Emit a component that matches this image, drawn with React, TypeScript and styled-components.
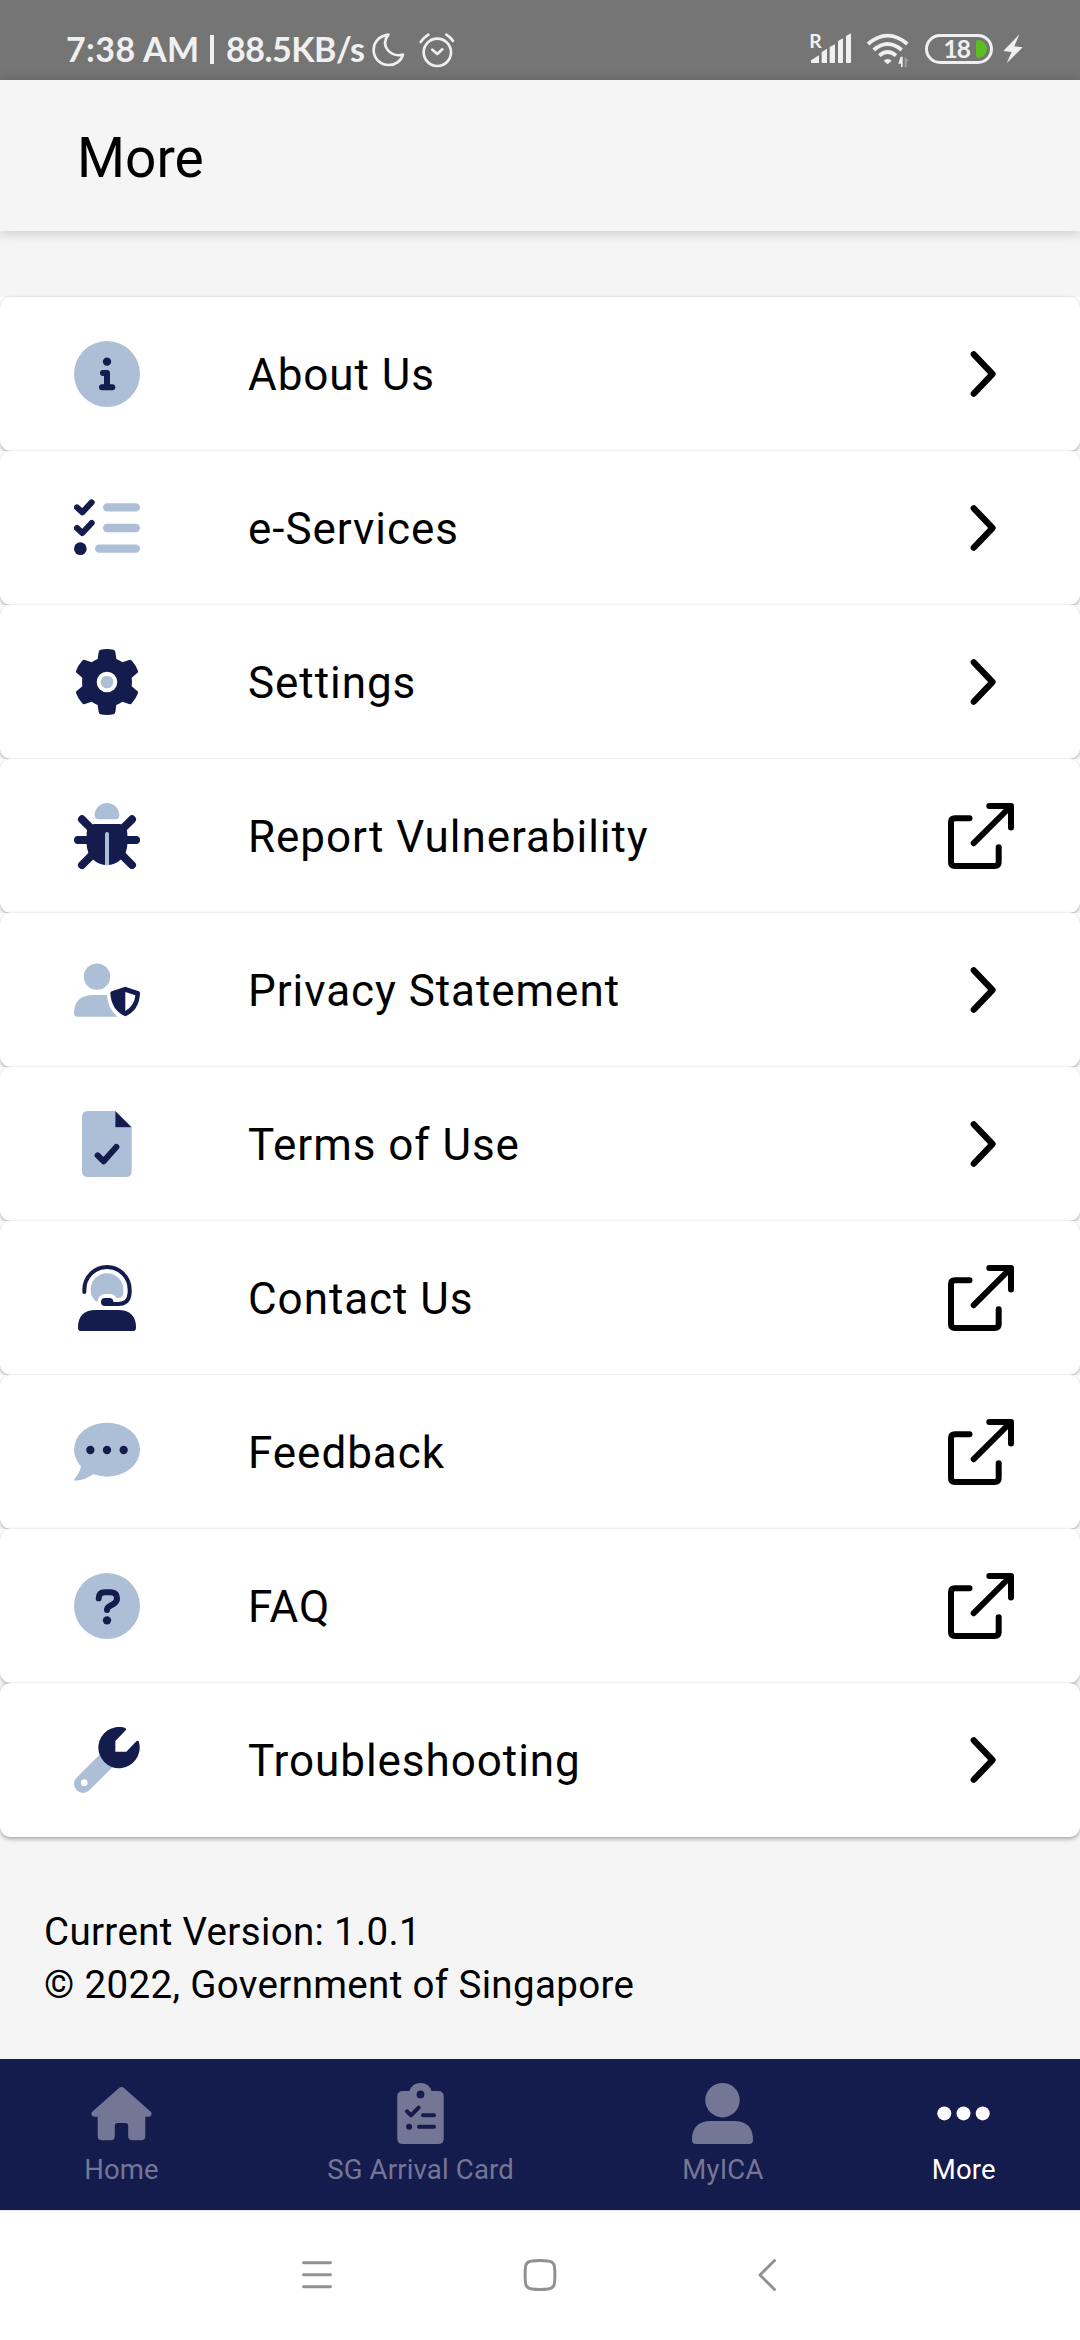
import React from "react";
import styled, { createGlobalStyle } from "styled-components";

const NAVY = "#141b4d";
const MIST = "#adbfd6";
const DIM = "#747695";
const LIGHT = "#f0f0f0";

const GlobalStyle = createGlobalStyle`
  * { box-sizing: border-box; }
  body { margin: 0; background: #f5f5f5; font-family: Roboto, "Noto Sans", sans-serif; color: #000; }
  svg { display: block; flex: none; }
`;

const Screen = styled.div`
  width: 1080px;
  height: 2340px;
  display: flex;
  flex-direction: column;
  background: #f5f5f5;
  overflow: hidden;
`;

const StatusBar = styled.header`
  height: 80px;
  flex: none;
  display: flex;
  justify-content: space-between;
  padding: 32px 57px 0 66px;
  background: #757575;
`;

const StatusGroup = styled.div`
  display: flex;
  align-items: flex-start;
`;

const StatusText = styled.span<{ $w: number; $track?: number }>`
  width: ${(p) => p.$w}px;
  font: 700 34px/34px Lato, "Noto Sans", sans-serif;
  letter-spacing: ${(p) => p.$track ?? 0}px;
  white-space: nowrap;
  color: ${LIGHT};
`;

const Divider = styled.span`
  width: 4px;
  height: 29px;
  margin: 3px 12px 0 0;
  background: ${LIGHT};
`;

const IconGap = styled.span<{ $w: number }>`
  width: ${(p) => p.$w}px;
`;

const Battery = styled.div`
  width: 68px;
  height: 30px;
  margin-top: 2px;
  display: flex;
  align-items: center;
  justify-content: flex-end;
  gap: 6px;
  padding-right: 3px;
  border: 3px solid ${LIGHT};
  border-radius: 15px;
  font: 700 24.5px/24px Lato, "Noto Sans", sans-serif;
  letter-spacing: -1px;
  color: ${LIGHT};
`;

const Charge = styled.span`
  width: 11px;
  height: 18px;
  border-radius: 2px 9px 9px 2px;
  background: #5bc01f;
`;

const IconShift = styled.span`
  display: flex;
  padding-top: 2px;
`;

const AppBar = styled.div`
  height: 151px;
  flex: none;
  display: flex;
  align-items: center;
  padding: 5px 0 0 77px;
  box-shadow: 0 1px 12px rgba(0, 0, 0, 0.22);
`;

const Title = styled.h1`
  margin: 0;
  font-size: 55px;
  font-weight: 400;
  line-height: 64px;
`;

const List = styled.ul`
  list-style: none;
  margin: 66px 0 0;
  padding: 0;
  flex: none;
`;

const Item = styled.li`
  background: #fff;
  &:last-child { background: none; }
`;

const Row = styled.div`
  height: 154px;
  display: flex;
  align-items: center;
  padding: 0 66px 0 74px;
  border-radius: 11px;
  background: #fff;
  box-shadow: 0 2px 4px rgba(0, 0, 0, 0.32), 0 -1px 0 rgba(0, 0, 0, 0.025);
`;

const RowLabel = styled.span`
  flex: 1;
  margin-left: 108px;
  padding-top: 1px;
  font-size: 44px;
  line-height: 52px;
  letter-spacing: 0.95px;
`;

const Footer = styled.footer`
  flex: 1;
  padding: 68px 44px 0;
  font-size: 38.5px;
  line-height: 53px;
  letter-spacing: 0.34px;
`;

const TabBar = styled.nav`
  height: 151px;
  flex: none;
  display: flex;
  justify-content: space-around;
  padding-top: 24px;
  background: ${NAVY};
`;

const Tab = styled.div<{ $active?: boolean }>`
  display: flex;
  flex-direction: column;
  align-items: center;
  gap: 10px;
  color: ${(p) => (p.$active ? "#fff" : DIM)};
  font-size: 27.5px;
  line-height: 32px;
  letter-spacing: 0.18px;
`;

const SystemNav = styled.div`
  height: 130px;
  flex: none;
  display: flex;
  justify-content: center;
  gap: 163px;
  padding-top: 34px;
  border-top: 1px solid #e6e6f2;
  background: #fff;
`;

const Duo = ({ children }: { children: React.ReactNode }) => (
  <svg width="66" height="66" viewBox="0 0 198 198" fill="none" strokeLinecap="round" strokeLinejoin="round">
    {children}
  </svg>
);

const InfoIcon = () => (
  <Duo>
    <circle cx="99" cy="99" r="99" fill={MIST} />
    <circle cx="99" cy="62" r="12.5" fill={NAVY} />
    <path d="M87 96H99V139M84 139H115" stroke={NAVY} strokeWidth="18" />
  </Duo>
);

const ServicesIcon = () => (
  <Duo>
    <path d="M9 37L25 52L53 22M9 99L25 114L53 84" stroke={NAVY} strokeWidth="18" />
    <circle cx="19" cy="161" r="19" fill={NAVY} />
    <path d="M99.500 37H185.500M99.500 99H185.500M75.500 161H185.500" stroke={MIST} strokeWidth="25" />
  </Duo>
);

const GearIcon = () => (
  <Duo>
    <path
      fill={NAVY}
      d="M79 2Q99 -2 119 2Q123 4 124 9L127 30Q137 34 145 40L165 33Q170 31 174 36Q186 49 192 66Q193 70 189 73L173 86Q174.500 99 173 112L189 125Q193 128 192 132Q186 149 174 162Q170 167 165 165L145 158Q137 164 127 168L124 189Q123 194 119 196Q99 200 79 196Q75 194 74 189L71 168Q61 164 53 158L33 165Q28 167 24 162Q12 149 6 132Q5 128 9 125L25 112Q23.500 99 25 86L9 73Q5 70 6 66Q12 49 24 36Q28 31 33 33L53 40Q61 34 71 30L74 9Q75 4 79 2Z"
    />
    <circle cx="99" cy="99" r="31" fill="#fff" />
    <circle cx="99" cy="99" r="19" fill={MIST} />
  </Duo>
);

const BugIcon = () => (
  <Duo>
    <path d="M62 37A37 37 0 0 1 136 37Q136 49 124 49H74Q62 49 62 37Z" fill={MIST} />
    <path d="M24 49L56 81M174 49L142 81M12 111H186M24 186L56 154M174 186L142 154" stroke={NAVY} strokeWidth="24" />
    <path d="M60 63H138Q158 68 160 90V124A61 62 0 0 1 38 124V90Q40 68 60 63Z" fill={NAVY} />
    <path d="M93 186V93Q93 87 99 87Q105 87 105 93V186Z" fill={MIST} />
  </Duo>
);

const PrivacyIcon = () => (
  <Duo>
    <circle cx="69" cy="59" r="39.5" fill={MIST} />
    <path d="M0 168Q1 114 58 114H99Q101 155 130 179H11Q0 179 0 168Z" fill={MIST} />
    <path d="M154 89L194 103Q198 105 198 109Q196 160 154 178Q112 160 109 109Q109 105 113 103Z" fill={NAVY} />
    <path d="M154 105L184 115Q182 146 154 162Z" fill="#fff" />
  </Duo>
);

const TermsIcon = () => (
  <Duo>
    <path d="M42 0H124V49H173V180Q173 198 155 198H42Q24 198 24 180V18Q24 0 42 0Z" fill={MIST} />
    <path d="M124 0L173 49H124Z" fill={NAVY} />
    <path d="M71 133L89 151L127 108" stroke={NAVY} strokeWidth="18" />
  </Duo>
);

const ContactIcon = () => (
  <Duo>
    <path d="M50 74A49 49 0 0 1 148 74V82Q148 98 134 99H127Q121 87 108 87H92Q73 89 70 112Q50 98 50 74Z" fill={MIST} />
    <path d="M31 81V74A68 68 0 0 1 167 74V83Q165 117 133 117H104" stroke={NAVY} strokeWidth="12" />
    <rect x="81" y="99" width="37" height="24" rx="12" fill={NAVY} />
    <path d="M12 188Q12 135 66 135H132Q186 135 186 188Q186 198 176 198H22Q12 198 12 188Z" fill={NAVY} />
  </Duo>
);

const FeedbackIcon = () => (
  <Duo>
    <ellipse cx="99" cy="92" rx="99" ry="81" fill={MIST} />
    <path d="M22 138Q18 161 2 179Q-2 185 4 185Q34 184 62 163Z" fill={MIST} />
    <circle cx="49" cy="93" r="12.5" fill={NAVY} />
    <circle cx="99" cy="93" r="12.5" fill={NAVY} />
    <circle cx="149" cy="93" r="12.5" fill={NAVY} />
  </Duo>
);

const FaqIcon = () => (
  <Duo>
    <circle cx="99" cy="99" r="99" fill={MIST} />
    <path d="M74 76Q75 58 92 58H110Q129 59 129 76Q129 86 120 92L106 100Q99 104 99 111" stroke={NAVY} strokeWidth="18" />
    <circle cx="99" cy="142" r="12.5" fill={NAVY} />
  </Duo>
);

const WrenchIcon = () => (
  <Duo>
    <path d="M27 171L100 98" stroke={MIST} strokeWidth="54" />
    <circle cx="31" cy="167" r="10" fill="#fff" />
    <path d="M152 2Q159 5 155 10L124 42V74H157L187 43Q193 39 195 46A62 62 0 1 1 152 2Z" fill={NAVY} />
  </Duo>
);

const Chevron = () => (
  <svg width="66" height="66" viewBox="0 0 66 66" fill="none" stroke="#000" strokeWidth="6.300" strokeLinecap="round" strokeLinejoin="round">
    <path d="M25.800 13.400L44.500 33L25.800 52.600" />
  </svg>
);

const External = () => (
  <svg width="66" height="66" viewBox="0 0 66 66" fill="none" stroke="#000" strokeWidth="6" strokeLinecap="round" strokeLinejoin="round">
    <path d="M21.500 15.300H7Q3 15.300 3 19.300V59Q3 63 7 63H46.700Q50.700 63 50.700 59V44.300" />
    <path d="M41.300 3H63V24.500M62 4L25.700 40.200" />
  </svg>
);

const HomeTab = () => (
  <svg width="61" height="61" viewBox="0 0 61 61" fill={DIM}>
    <path d="M28 5Q30.500 3 33 5L59.500 28.500Q61.500 31 60 32.500Q59 33.700 57 33.700H54.300V53Q54.300 57.300 50 57.300H41.500Q37.200 57.300 37.200 53V43Q37.200 40 34.200 40H26.800Q23.800 40 23.800 43V53Q23.800 57.300 19.500 57.300H11Q6.700 57.300 6.700 53V33.700H4Q2 33.700 1 32.500Q-.5 31 1.500 28.500Z" />
  </svg>
);

const CardTab = () => (
  <svg width="61" height="61" viewBox="0 0 61 61" fill="none" strokeLinecap="round" strokeLinejoin="round">
    <path d="M13 8H19.500Q22 0 30.500 0Q39 0 41.500 8H48Q53.700 8 53.700 13.500V55.500Q53.700 61 48 61H13Q7.300 61 7.300 55.500V13.500Q7.300 8 13 8Z" fill={DIM} />
    <circle cx="30.500" cy="11.400" r="3.900" fill={NAVY} />
    <path d="M17 28.300L21 32.300L28.600 24.700M33 32.300H44M29 43.700H44" stroke={NAVY} strokeWidth="4" />
    <circle cx="19.100" cy="43.700" r="3" fill={NAVY} />
  </svg>
);

const UserTab = () => (
  <svg width="61" height="61" viewBox="0 0 61 61" fill={DIM}>
    <circle cx="30.500" cy="17.200" r="17.200" />
    <path d="M0 57Q0 38 19 38H42Q61 38 61 57Q61 61 57 61H4Q0 61 0 57Z" />
  </svg>
);

const MoreTab = () => (
  <svg width="61" height="61" viewBox="0 0 61 61" fill="#fff">
    <circle cx="11.300" cy="30.400" r="7" />
    <circle cx="30.500" cy="30.400" r="7" />
    <circle cx="49.700" cy="30.400" r="7" />
  </svg>
);

const Moon = () => (
  <svg width="36" height="36" viewBox="0 0 108 108" fill="none" stroke={LIGHT} strokeWidth="8" strokeLinejoin="round">
    <path d="M52 8C24 12 8 30 8 54C8 80 28 99 54 99C74 99 91 86 96 68C80 72 62 68 50 54C39 40 40 24 52 8Z" />
  </svg>
);

const Alarm = () => (
  <svg width="39" height="36" viewBox="0 0 117 108" fill="none" stroke={LIGHT} strokeWidth="8" strokeLinecap="round" strokeLinejoin="round">
    <circle cx="58" cy="61" r="41" />
    <path d="M8 30Q18 16 31 8M85 8Q98 16 105 27M43 53L58 66L73 52" />
  </svg>
);

const Signal = () => (
  <svg width="48" height="40" viewBox="72 75 144 120" fill={LIGHT}>
    <text x="88" y="143" fontFamily="Lato, sans-serif" fontWeight="700" fontSize="58">R</text>
    <path d="M93 181L117 166V189H95Q93 189 93 187ZM125 156L141 146V189H127Q125 189 125 187ZM149 141L165 133V187Q165 189 163 189H151Q149 189 149 187ZM174 123L189 115V187Q189 189 187 189H176Q174 189 174 187ZM198 108L213 100V187Q213 189 211 189H200Q198 189 198 187Z" />
  </svg>
);

const SignalSlot = styled.span`
  display: flex;
  margin-top: -7px;
`;

const Wifi = () => (
  <svg width="44" height="36" viewBox="259 96 132 108" fill="none" stroke={LIGHT} strokeWidth="11">
    <path d="M265 132Q324 82 383 132M282 150Q324 114 366 150M299 167Q324 145 349 167" />
    <path d="M312 182Q324 172 336 182L324 193Z" fill={LIGHT} stroke="none" />
    <path d="M363 170H369V201H364V191H356Z" fill={LIGHT} stroke="none" />
    <path d="M375 201V170L388 184H381V201Z" fill="#a0a0a0" stroke="none" />
  </svg>
);

const Bolt = () => (
  <svg width="20" height="30" viewBox="668 102 60 90" fill={LIGHT}>
    <path d="M717 103L669 153L694 156L679 190L727 142L702 139Z" />
  </svg>
);

const SysIcon = ({ d }: { d: string }) => (
  <svg width="60" height="60" viewBox="0 0 60 60" fill="none" stroke="#919191" strokeWidth="2.900" strokeLinecap="round" strokeLinejoin="round">
    <path d={d} />
  </svg>
);

const rows = [
  { label: "About Us", Icon: InfoIcon },
  { label: "e-Services", Icon: ServicesIcon },
  { label: "Settings", Icon: GearIcon },
  { label: "Report Vulnerability", Icon: BugIcon, external: true },
  { label: "Privacy Statement", Icon: PrivacyIcon },
  { label: "Terms of Use", Icon: TermsIcon },
  { label: "Contact Us", Icon: ContactIcon, external: true },
  { label: "Feedback", Icon: FeedbackIcon, external: true },
  { label: "FAQ", Icon: FaqIcon, external: true },
  { label: "Troubleshooting", Icon: WrenchIcon },
];

const tabs = [
  { label: "Home", Icon: HomeTab },
  { label: "SG Arrival Card", Icon: CardTab },
  { label: "MyICA", Icon: UserTab },
  { label: "More", Icon: MoreTab, active: true },
];

export default function App() {
  return (
    <>
      <GlobalStyle />
      <Screen>
        <StatusBar>
          <StatusGroup>
            <StatusText $w={144} $track={0.4}>7:38 AM</StatusText>
            <Divider />
            <StatusText $w={145} $track={-0.5}>88.5KB/s</StatusText>
            <Moon />
            <IconGap $w={11} />
            <Alarm />
          </StatusGroup>
          <StatusGroup>
            <SignalSlot>
              <Signal />
            </SignalSlot>
            <IconGap $w={14} />
            <Wifi />
            <IconGap $w={15} />
            <Battery>
              18
              <Charge />
            </Battery>
            <IconGap $w={10} />
            <IconShift>
              <Bolt />
            </IconShift>
          </StatusGroup>
        </StatusBar>
        <AppBar>
          <Title>More</Title>
        </AppBar>
        <List>
          {rows.map(({ label, Icon, external }) => (
            <Item key={label}>
              <Row>
                <Icon />
                <RowLabel>{label}</RowLabel>
                {external ? <External /> : <Chevron />}
              </Row>
            </Item>
          ))}
        </List>
        <Footer>
          <div>Current Version: 1.0.1</div>
          <div>© 2022, Government of Singapore</div>
        </Footer>
        <TabBar>
          {tabs.map(({ label, Icon, active }) => (
            <Tab key={label} $active={active}>
              <Icon />
              <span>{label}</span>
            </Tab>
          ))}
        </TabBar>
        <SystemNav>
          <SysIcon d="M16.500 17.700H43.500M16.500 29.700H43.500M16.500 41.700H43.500" />
          <SysIcon d="M22 16Q30 15 38 16Q44 16.500 44.500 22Q45.300 30 44.500 38Q44 43.500 38 44Q30 45 22 44Q16 43.500 15.500 38Q14.700 30 15.500 22Q16 16.500 22 16Z" />
          <SysIcon d="M41.500 15.500L27 30L41.500 44.500" />
        </SystemNav>
      </Screen>
    </>
  );
}
